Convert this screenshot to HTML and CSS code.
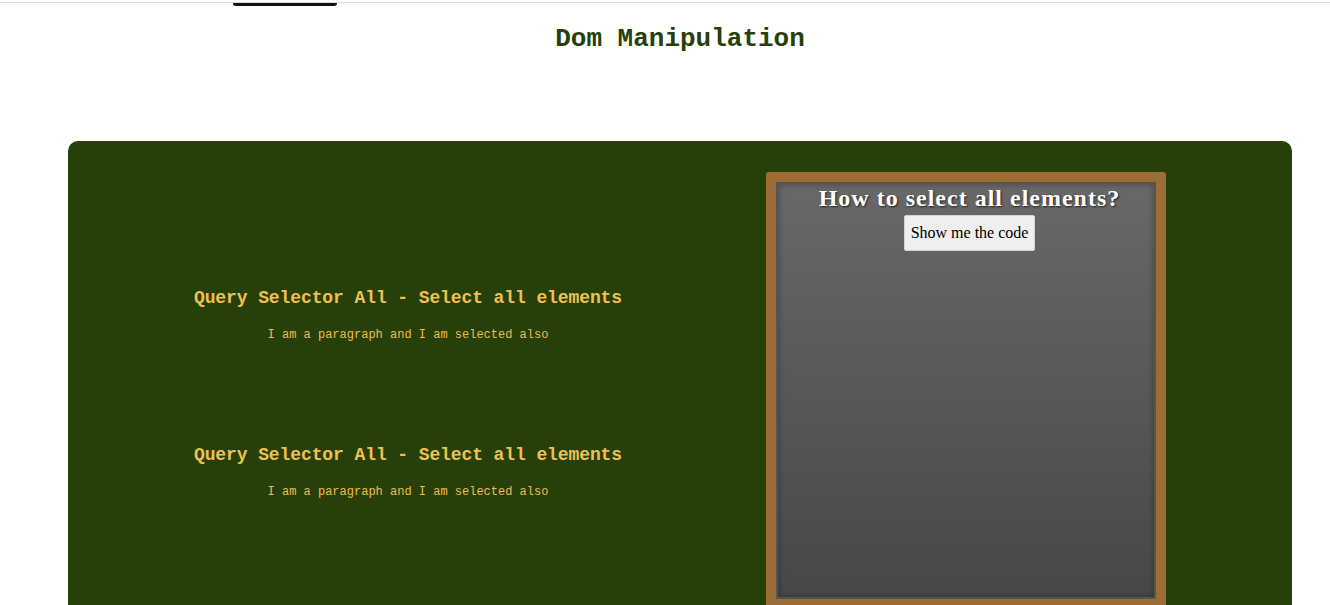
FILE: index.html
```html
<!DOCTYPE html>
<html lang="en">
<head>
<meta charset="utf-8">
<title>Dom Manipulation</title>
<link rel="stylesheet" href="styles.css">
</head>
<body>
<div class="topbar"><div class="stub"></div></div>
<div class="page">
  <h1 class="title">Dom Manipulation</h1>
  <main class="panel">
    <div class="examples">
      <section class="example">
        <h2 class="example-title">Query Selector All - Select all elements</h2>
        <p class="example-text">I am a paragraph and I am selected also</p>
      </section>
      <section class="example">
        <h2 class="example-title">Query Selector All - Select all elements</h2>
        <p class="example-text">I am a paragraph and I am selected also</p>
      </section>
    </div>
    <div class="board">
      <div class="board-inner">
        <h2 class="board-title">How to select all elements?</h2>
        <button class="board-btn" type="button">Show me the code</button>
      </div>
    </div>
  </main>
</div>
</body>
</html>
```
FILE: styles.css
```css
html, body {
  margin: 0;
  padding: 0;
  overflow: hidden;
  background: #ffffff;
}
.topbar {
  height: 2px;
  border-bottom: 1px solid #dcdcdc;
  display: flex;
}
.stub {
  margin-left: 233px;
  margin-top: 3px;
  width: 102px;
  height: 0;
  border: 1px solid #111;
  border-top: none;
  border-bottom: 3px solid #111;
  border-radius: 0 0 4px 4px;
}
.page {
  margin-left: 68px;
  width: 1224px;
}
.title {
  margin: 21px 0 0;
  text-align: center;
  font-family: "Liberation Mono", "DejaVu Sans Mono", monospace;
  font-weight: bold;
  font-size: 26px;
  color: #27400a;
  line-height: 30px;
}
.panel {
  margin-top: 87px;
  height: 464px;
  overflow: hidden;
  background: #27400a;
  border-radius: 10px 10px 0 0;
  display: grid;
  grid-template-columns: 680px 400px;
  column-gap: 18px;
  padding-top: 31px;
  box-sizing: border-box;
  align-items: start;
}
.examples {
  padding-top: 116px;
  display: flex;
  flex-direction: column;
  gap: 103px;
}
.example {
  text-align: center;
  font-family: "Liberation Mono", "DejaVu Sans Mono", monospace;
  color: #f1c14f;
}
.example-title {
  margin: 0;
  font-size: 18px;
  font-weight: bold;
  letter-spacing: -0.1px;
  line-height: 20px;
}
.example-text {
  margin: 20px 0 0;
  font-size: 12px;
  line-height: 14px;
  color: #efbd4c;
}
.board {
  width: 400px;
  height: 437px;
  box-sizing: border-box;
  border: 10px solid #9c6e35;
  border-radius: 3px;
  background: #9c6e35;
}
.board-inner {
  height: 100%;
  box-sizing: border-box;
  padding-left: 7px;
  border: 2px solid #545454;
  background: linear-gradient(#686868, #474747);
  box-shadow: inset 0 0 6px rgba(0, 0, 0, 0.35);
  display: flex;
  flex-direction: column;
  align-items: center;
}
.board-title {
  margin: 0;
  font-family: "Liberation Serif", "Times New Roman", serif;
  font-weight: bold;
  font-size: 24px;
  line-height: 28px;
  letter-spacing: 1px;
  color: #ffffff;
  text-shadow: 1px 1px 2px #222;
}
.board-btn {
  margin-top: 3px;
  padding: 8px 6px;
  font-family: "Liberation Serif", "Times New Roman", serif;
  font-size: 16px;
  line-height: 18px;
  color: #000;
  background: #efefef;
  border: 1px solid #d4d4d4;
  border-radius: 2px;
}
```
